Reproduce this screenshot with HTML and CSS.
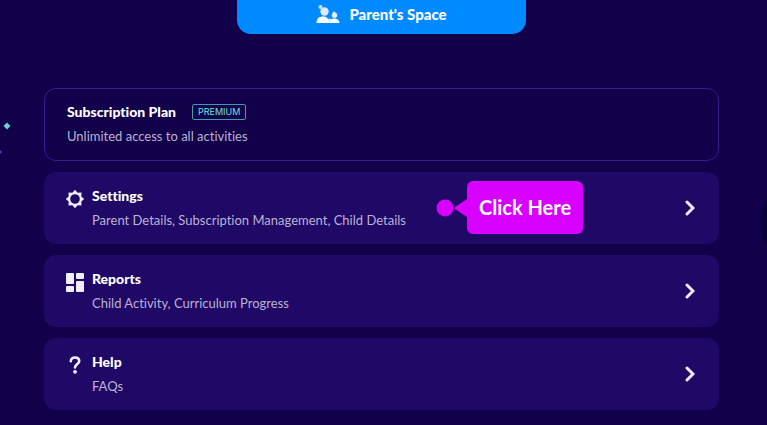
FILE: index.html
```html
<!DOCTYPE html>
<html lang="en">
<head>
<meta charset="utf-8">
<meta name="viewport" content="width=device-width, initial-scale=1">
<title>Parent's Space</title>
<link rel="stylesheet" href="styles.css">
</head>
<body>
<div class="backdrop" aria-hidden="true">
  <svg class="sparkle sparkle-teal" viewBox="0 0 8 8"><path d="M4 .5 7.500 4 4 7.500.5 4z"/></svg>
  <svg class="sparkle sparkle-violet" viewBox="0 0 8 8"><path d="M4 1 7 4 4 7 1 4z"/></svg>
  <div class="orb"></div>
</div>
<div class="page">
  <header class="banner">
    <svg class="family-icon" viewBox="0 0 24 20" aria-hidden="true">
      <circle cx="4.500" cy="3" r="2" fill="#cfe0f4"/>
      <circle cx="8.500" cy="7.500" r="4.200" fill="#dfe9f7"/>
      <circle cx="18" cy="8.800" r="1.300" fill="#cfe0f4"/>
      <circle cx="18.500" cy="11.200" r="2.700" fill="#e4eefb"/>
      <path d="M12 19v-4q1.500-1 3 0v4z" fill="#cfe0f4"/>
      <path d="M.5 19c0-4.500 2.500-6.500 6.500-6.500s6 2.500 6 6.500z" fill="#fff"/>
      <path d="M13.500 19c0-3 1.500-4.500 4.500-4.500s5.500 1.500 5.500 4.500z" fill="#fff"/>
    </svg>
    <h1>Parent's Space</h1>
  </header>
  <main class="cards">
    <section class="card plan">
      <div class="plan-head"><h2>Subscription Plan</h2><span class="badge">PREMIUM</span></div>
      <p>Unlimited access to all activities</p>
    </section>
    <a class="card row" href="#settings">
      <svg class="icon" viewBox="0 0 20 20" aria-hidden="true"><path fill="#f1eefc" fill-rule="evenodd" d="m10 .8 2.600 2.900 3.900-.2-.2 3.900L19.200 10l-2.900 2.600.2 3.900-3.900-.2L10 19.200l-2.600-2.900-3.900.2.2-3.900L.8 10l2.900-2.600-.2-3.900 3.900.2zM10 5.200a4.800 4.800 0 1 0 0 9.600 4.800 4.800 0 0 0 0-9.600z"/></svg>
      <div class="text"><h2>Settings</h2><p>Parent Details, Subscription Management, Child Details</p></div>
      <svg class="chevron" viewBox="0 0 10 16" aria-hidden="true"><path d="m2 2 6 6-6 6"/></svg>
      <span class="pointer">
        <svg class="pointer-mark" viewBox="0 0 31 18" aria-hidden="true"><circle cx="9" cy="9" r="8.500"/><path d="M31 0v18L19 10q-1-1 0-2z"/></svg>
        <span class="pointer-label">Click Here</span>
      </span>
    </a>
    <a class="card row" href="#reports">
      <svg class="icon" viewBox="0 0 20 20" aria-hidden="true"><g fill="#f1eefc"><rect x="1" y="1" width="8" height="11" rx="1"/><rect x="11" y="1" width="8" height="6" rx="1"/><rect x="1" y="14" width="8" height="6" rx="1"/><rect x="11" y="9" width="8" height="11" rx="1"/></g></svg>
      <div class="text"><h2>Reports</h2><p>Child Activity, Curriculum Progress</p></div>
      <svg class="chevron" viewBox="0 0 10 16" aria-hidden="true"><path d="m2 2 6 6-6 6"/></svg>
    </a>
    <a class="card row" href="#help">
      <svg class="icon" viewBox="0 0 20 20" aria-hidden="true"><path d="M5.800 6.300C5.800 4 7.500 2.500 10 2.500S14.200 4 14.200 6.300C14.200 9.300 10 9 10 12.500" fill="none" stroke="#f1eefc" stroke-width="2.600" stroke-linecap="round"/><circle cx="10" cy="16.800" r="1.900" fill="#f1eefc"/></svg>
      <div class="text"><h2>Help</h2><p>FAQs</p></div>
      <svg class="chevron" viewBox="0 0 10 16" aria-hidden="true"><path d="m2 2 6 6-6 6"/></svg>
    </a>
  </main>
</div>
</body>
</html>
```
FILE: styles.css
```css
* {
  box-sizing: border-box;
}

body {
  position: relative;
  margin: 0;
  min-height: 100vh;
  background: #12004a;
  color: #fff;
  font-family: Lato, "Open Sans", sans-serif;
  font-variant-ligatures: none;
}

.backdrop {
  position: absolute;
  inset: 0;
  overflow: hidden;
}

.page {
  position: relative;
  padding: 0 48px 15px 44px;
}

h1,
h2,
p {
  margin: 0;
}

.banner {
  display: flex;
  align-items: center;
  justify-content: center;
  gap: 9px;
  width: 289px;
  max-width: 100%;
  height: 34px;
  margin: 0 auto 54px;
  padding-bottom: 6px;
  background: #008aff;
  border-radius: 0 0 14px 14px;
}

.family-icon {
  width: 24px;
  height: 20px;
}

h1,
h2 {
  font-size: 14px;
  line-height: 20px;
  font-weight: 900;
}

h1 {
  font-size: 15px;
}

.cards {
  display: flex;
  flex-direction: column;
  gap: 11px;
}

.card {
  min-height: 72px;
  padding: 14px 22px;
  border-radius: 12px;
  background: #1f0866;
  color: #fff;
  text-decoration: none;
}

.card p {
  margin-top: 4px;
  color: #bbb2d3;
  font-size: 13px;
  line-height: 20px;
}

.plan {
  padding: 13px 22px 14px;
  background: transparent;
  border: 1px solid #351c91;
}

.plan-head {
  display: flex;
  align-items: center;
  gap: 16px;
}

.badge {
  padding: 0 5px;
  border: 1px solid #419baa;
  border-radius: 2px;
  color: #70e0dc;
  font-family: Inter, sans-serif;
  font-size: 9px;
  line-height: 14px;
}

.row {
  position: relative;
  display: flex;
  align-items: center;
}

.icon {
  flex: none;
  align-self: flex-start;
  width: 20px;
  height: 20px;
  margin: 3px 7px 0 -1px;
}

.text {
  flex: 1;
}

.chevron {
  width: 10px;
  height: 16px;
  margin-right: 2px;
  fill: none;
  stroke: #eeeafa;
  stroke-width: 3;
  stroke-linecap: round;
}

.pointer {
  position: absolute;
  top: 9px;
  left: 392px;
  display: flex;
  align-items: center;
}

.pointer-mark {
  width: 31px;
  height: 18px;
  fill: #d800ff;
}

.pointer-label {
  padding: 0 12px;
  border-radius: 6px;
  background: #d800ff;
  font-size: 20px;
  line-height: 53px;
  font-weight: 700;
  white-space: nowrap;
}

.sparkle {
  position: absolute;
  width: 8px;
  height: 8px;
}

.sparkle-teal {
  top: 122px;
  left: 3px;
  fill: #70d0cc;
}

.sparkle-violet {
  top: 148px;
  left: -5px;
  fill: #5138b5;
}

.orb {
  position: absolute;
  top: 183px;
  right: -73px;
  width: 80px;
  height: 80px;
  border-radius: 50%;
  background: #080039;
}
```
